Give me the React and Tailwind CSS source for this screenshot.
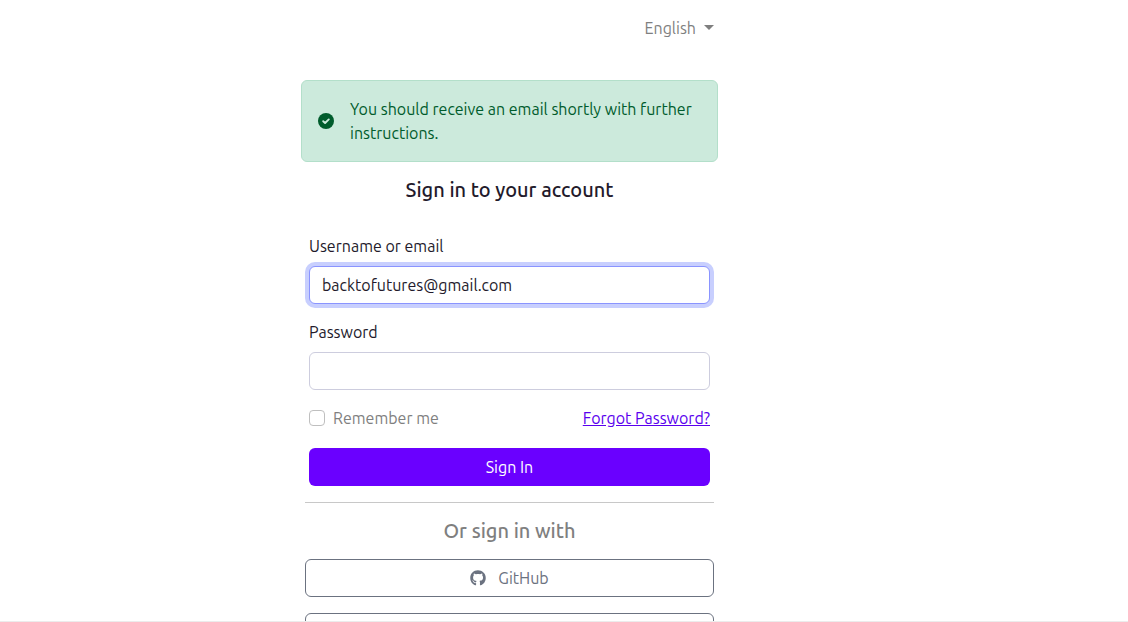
import { FaGithub } from 'react-icons/fa';

const inputClass =
  'block h-[38px] w-full rounded-md border bg-white px-3 text-[#231a2b] outline-none';

const providerClass =
  'flex h-[38px] w-full items-center justify-center gap-3 rounded-md border border-[#6b7280] text-[#6b7280]';

function CheckIcon() {
  return (
    <svg viewBox="0 0 16 16" className="size-4 shrink-0" aria-hidden="true">
      <circle cx="8" cy="8" r="8" fill="currentColor" />
      <path d="M5.2 8.2 7.1 10 10.8 6.4" fill="none" stroke="#cceadc" strokeWidth="1.9" strokeLinecap="round" strokeLinejoin="round" />
    </svg>
  );
}

export default function App() {
  return (
    <div className="h-screen overflow-hidden border-b border-[#ececec] bg-white font-[Ubuntu,'Noto_Sans',sans-serif] text-base leading-6 text-[#231a2b]">
      <main className="pr-[109px]">
        <div className="mx-auto flex w-full max-w-[417px] flex-col">
          <div className="flex justify-end pt-4 pr-1">
            <button type="button" aria-haspopup="menu" className="flex items-center gap-2 text-[#7f7f7f]">
              English
              <span className="mb-0.5 border-x-[5px] border-t-[5px] border-x-transparent border-t-[#7f7f7f]" />
            </button>
          </div>

          <div role="alert" className="mt-10 flex items-center gap-4 rounded-md border border-[#b3dfca] bg-[#cceadc] p-4 text-[#005c2c]">
            <CheckIcon />
            <p>You should receive an email shortly with further instructions.</p>
          </div>

          <h1 className="mt-4 text-center text-xl leading-6 font-medium">Sign in to your account</h1>

          <form className="mt-8 px-2" onSubmit={(event) => event.preventDefault()}>
            <label htmlFor="username" className="mb-2 block">Username or email</label>
            <input
              id="username"
              type="text"
              defaultValue="backtofutures@gmail.com"
              className={`${inputClass} border-[#8a94ff] ring-4 ring-[#c8cffe]`}
            />

            <label htmlFor="password" className="mt-4 mb-2 block">Password</label>
            <input id="password" type="password" className={`${inputClass} border-[#cdcdde]`} />

            <div className="mt-4 flex items-center justify-between">
              <label htmlFor="remember" className="flex items-center gap-2 text-[#7f7f7f]">
                <input
                  id="remember"
                  type="checkbox"
                  className="size-4 appearance-none rounded-sm border border-[#bfbfbf] bg-white checked:bg-[#6a00ff]"
                />
                Remember me
              </label>
              <a href="#forgot" className="text-[#5a00ee] underline">Forgot Password?</a>
            </div>

            <button type="submit" className="mt-[18px] h-[38px] w-full rounded-md bg-[#6a00ff] text-white">
              Sign In
            </button>
          </form>

          <section className="mt-4 px-1">
            <hr className="border-[#c8c8c8]" />
            <h2 className="mt-4 text-center text-xl leading-6 font-medium text-[#7f7f7f]">Or sign in with</h2>
            <div className="mt-4 flex flex-col gap-4">
              <button type="button" className={providerClass}>
                <FaGithub />
                GitHub
              </button>
              <button type="button" aria-label="Other provider" className={providerClass} />
            </div>
          </section>
        </div>
      </main>
    </div>
  );
}
